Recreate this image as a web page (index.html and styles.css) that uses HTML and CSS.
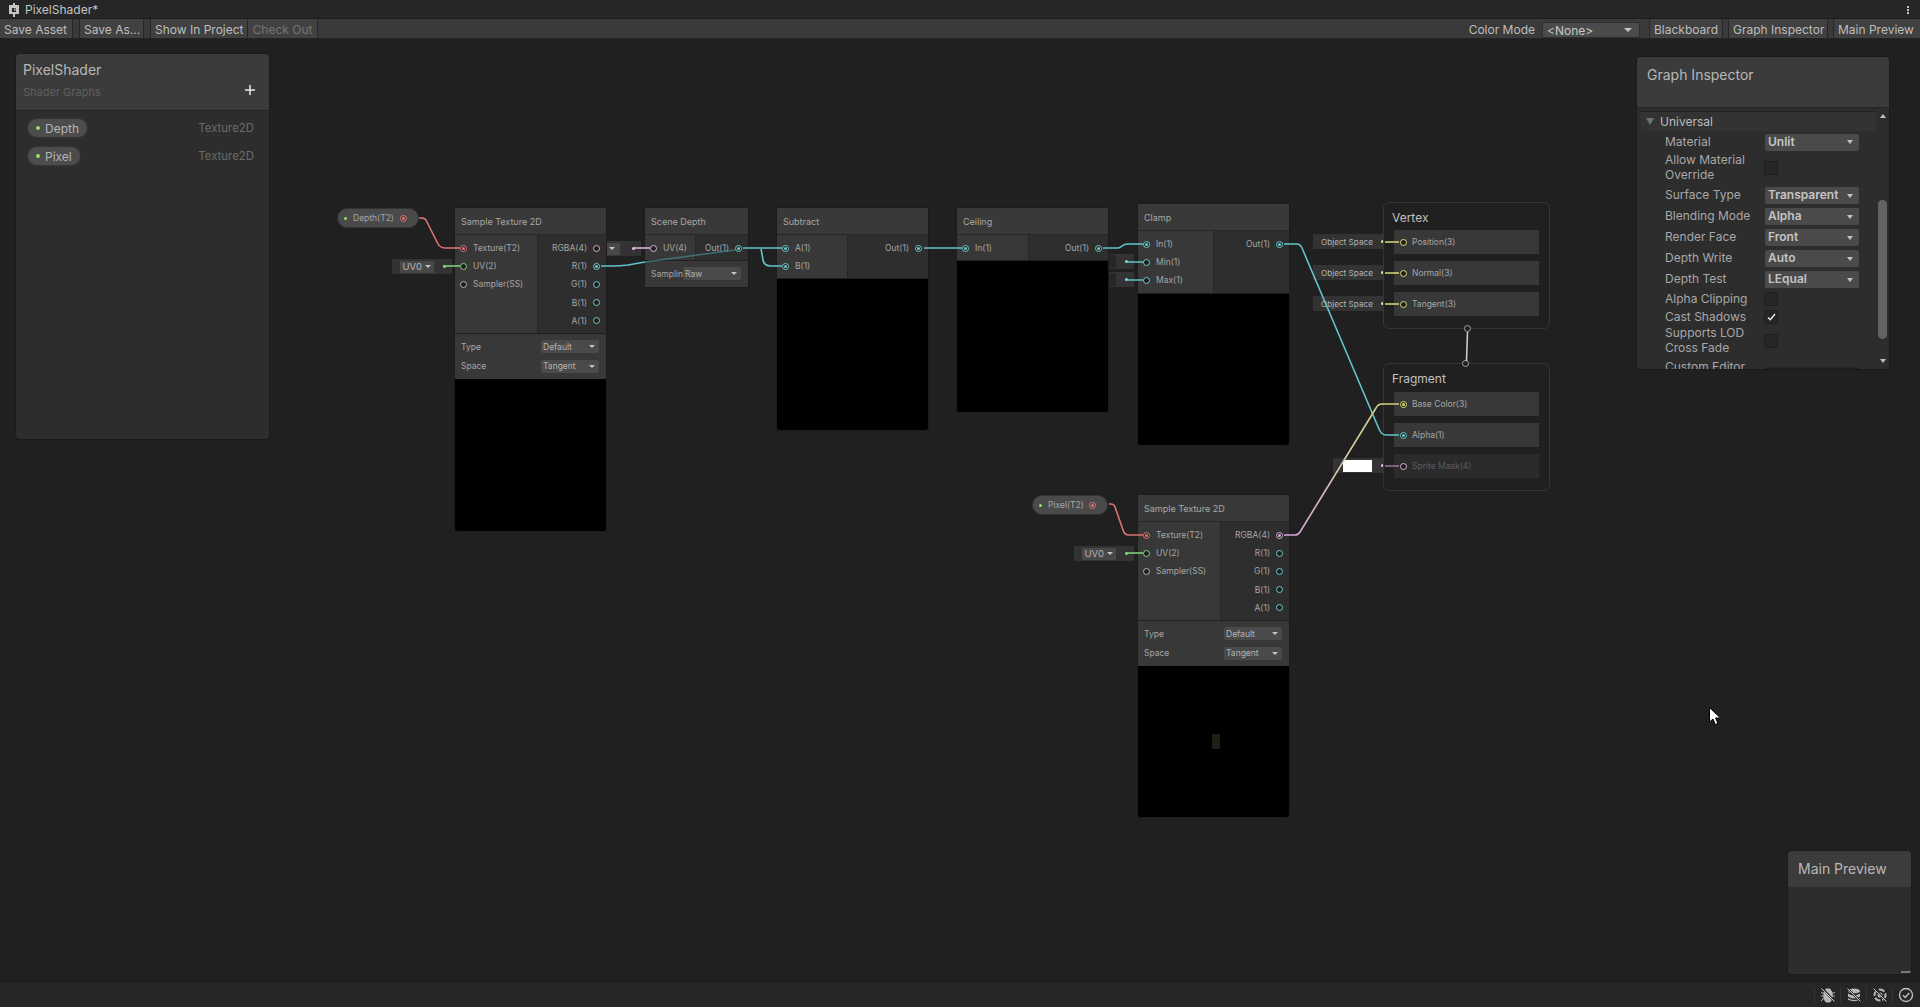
FILE: index.html
```html
<!DOCTYPE html>
<html lang="en">
<head>
<meta charset="utf-8">
<title>PixelShader</title>
<link rel="stylesheet" href="styles.css">
</head>
<body>
<div class="app">
  <header class="titlebar">
    <div class="tab">
      <svg class="tab-icon" viewBox="0 0 12 14" width="12" height="14"><path d="M5 0h2v2h4v9H7v3H5v-3H1V2h4z" fill="#c4c4c4"/><path d="M4 5h4v4H4z" fill="#262626"/><path d="M6 5.500h1.600v2H6z" fill="#c4c4c4"/></svg>
      <span>PixelShader*</span>
    </div>
    <div class="kebab"><i></i><i></i><i></i></div>
  </header>

  <nav class="toolbar">
    <button class="tb-btn w-save">Save Asset</button>
    <button class="tb-btn w-saveas">Save As...</button>
    <button class="tb-btn w-show">Show In Project</button>
    <button class="tb-btn w-check off">Check Out</button>
    <div class="tb-spring"></div>
    <span class="tb-label">Color Mode</span>
    <div class="tb-select"><span>&lt;None&gt;</span><i class="caret"></i></div>
    <button class="tb-btn w-board">Blackboard</button>
    <button class="tb-btn w-insp">Graph Inspector</button>
    <button class="tb-btn w-prev">Main Preview</button>
  </nav>

  <main class="canvas">
    <!-- default-value boxes sit behind their nodes -->
    <div class="slot s-uv1"><div class="slot-drop"><span>UV0</span><i class="caret"></i></div><i class="slot-dot green"></i></div>
    <div class="slot s-default"><div class="slot-drop"><span>Default</span><i class="caret"></i></div><i class="slot-dot pink"></i></div>
    <div class="slot s-min"><b class="slot-field"></b><i class="slot-dot teal"></i></div>
    <div class="slot s-max"><b class="slot-field"></b><i class="slot-dot teal"></i></div>
    <div class="slot s-uv2"><div class="slot-drop"><span>UV0</span><i class="caret"></i></div><i class="slot-dot green"></i></div>
    <div class="slot s-obj1"><span class="slot-text">Object Space</span><i class="slot-dot yellow"></i></div>
    <div class="slot s-obj2"><span class="slot-text">Object Space</span><i class="slot-dot yellow"></i></div>
    <div class="slot s-obj3"><span class="slot-text">Object Space</span><i class="slot-dot yellow"></i></div>
    <div class="slot s-color"><b class="swatch"></b><i class="slot-dot pink"></i></div>

    <div class="prop-pill p-depth"><i class="pdot"></i><span>Depth(T2)</span><i class="dot red on"></i></div>
    <div class="prop-pill p-pixel"><i class="pdot"></i><span>Pixel(T2)</span><i class="dot red on"></i></div>

    <section class="node n-sample1">
      <div class="node-title">Sample Texture 2D</div>
      <div class="ports">
        <div class="inputs w-83">
          <div class="port"><i class="dot red on"></i><span>Texture(T2)</span></div>
          <div class="port"><i class="dot green"></i><span>UV(2)</span></div>
          <div class="port"><i class="dot grey"></i><span>Sampler(SS)</span></div>
        </div>
        <div class="outputs">
          <div class="port"><span>RGBA(4)</span><i class="dot pink"></i></div>
          <div class="port"><span>R(1)</span><i class="dot teal on"></i></div>
          <div class="port"><span>G(1)</span><i class="dot teal"></i></div>
          <div class="port"><span>B(1)</span><i class="dot teal"></i></div>
          <div class="port"><span>A(1)</span><i class="dot teal"></i></div>
        </div>
      </div>
      <div class="options">
        <div class="opt"><label>Type</label><div class="opt-drop"><span>Default</span><i class="caret"></i></div></div>
        <div class="opt"><label>Space</label><div class="opt-drop"><span>Tangent</span><i class="caret"></i></div></div>
      </div>
      <div class="preview h-152"></div>
    </section>

    <section class="node n-depth">
      <div class="node-title">Scene Depth</div>
      <div class="ports">
        <div class="inputs w-51">
          <div class="port"><i class="dot pink"></i><span>UV(4)</span></div>
        </div>
        <div class="outputs">
          <div class="port"><span>Out(1)</span><i class="dot teal on"></i></div>
        </div>
      </div>
      <div class="options one">
        <div class="opt"><label class="clip">Sampling</label><div class="opt-drop raw"><span>Raw</span><i class="caret"></i></div></div>
      </div>
    </section>

    <section class="node n-sub">
      <div class="node-title">Subtract</div>
      <div class="ports">
        <div class="inputs w-71">
          <div class="port"><i class="dot teal on"></i><span>A(1)</span></div>
          <div class="port"><i class="dot teal on"></i><span>B(1)</span></div>
        </div>
        <div class="outputs">
          <div class="port"><span>Out(1)</span><i class="dot teal on"></i></div>
        </div>
      </div>
      <div class="preview h-151"></div>
    </section>

    <section class="node n-ceil">
      <div class="node-title">Ceiling</div>
      <div class="ports">
        <div class="inputs w-72">
          <div class="port"><i class="dot teal on"></i><span>In(1)</span></div>
        </div>
        <div class="outputs">
          <div class="port"><span>Out(1)</span><i class="dot teal on"></i></div>
        </div>
      </div>
      <div class="preview h-151"></div>
    </section>

    <section class="node n-clamp">
      <div class="node-title">Clamp</div>
      <div class="ports">
        <div class="inputs w-76">
          <div class="port"><i class="dot teal on"></i><span>In(1)</span></div>
          <div class="port"><i class="dot teal"></i><span>Min(1)</span></div>
          <div class="port"><i class="dot teal"></i><span>Max(1)</span></div>
        </div>
        <div class="outputs">
          <div class="port"><span>Out(1)</span><i class="dot teal on"></i></div>
        </div>
      </div>
      <div class="preview h-151"></div>
    </section>

    <section class="node n-sample2">
      <div class="node-title">Sample Texture 2D</div>
      <div class="ports">
        <div class="inputs w-83">
          <div class="port"><i class="dot red on"></i><span>Texture(T2)</span></div>
          <div class="port"><i class="dot green"></i><span>UV(2)</span></div>
          <div class="port"><i class="dot grey"></i><span>Sampler(SS)</span></div>
        </div>
        <div class="outputs">
          <div class="port"><span>RGBA(4)</span><i class="dot pink on"></i></div>
          <div class="port"><span>R(1)</span><i class="dot teal"></i></div>
          <div class="port"><span>G(1)</span><i class="dot teal"></i></div>
          <div class="port"><span>B(1)</span><i class="dot teal"></i></div>
          <div class="port"><span>A(1)</span><i class="dot teal"></i></div>
        </div>
      </div>
      <div class="options">
        <div class="opt"><label>Type</label><div class="opt-drop"><span>Default</span><i class="caret"></i></div></div>
        <div class="opt"><label>Space</label><div class="opt-drop"><span>Tangent</span><i class="caret"></i></div></div>
      </div>
      <div class="preview h-151"><b class="speck"></b></div>
    </section>

    <section class="context c-vertex">
      <h3>Vertex</h3>
      <div class="block"><i class="dot yellow"></i><span>Position(3)</span></div>
      <div class="block"><i class="dot yellow"></i><span>Normal(3)</span></div>
      <div class="block"><i class="dot yellow"></i><span>Tangent(3)</span></div>
      <i class="dot flow flow-bottom"></i>
    </section>
    <section class="context c-fragment">
      <h3>Fragment</h3>
      <div class="block"><i class="dot yellow on"></i><span>Base Color(3)</span></div>
      <div class="block"><i class="dot teal on"></i><span>Alpha(1)</span></div>
      <div class="block dim"><i class="dot pink"></i><span>Sprite Mask(4)</span></div>
      <i class="dot flow flow-top"></i>
    </section>

    <svg class="wires" viewBox="0 39 1920 944" width="1920" height="944" fill="none">
      <defs>
        <linearGradient id="rgbaWire" gradientUnits="userSpaceOnUse" x1="1290" y1="535" x2="1390" y2="404">
          <stop offset="0" stop-color="#d8a4d8"/><stop offset=".5" stop-color="#d8c8b0"/><stop offset="1" stop-color="#cfd07c"/>
        </linearGradient>
      </defs>
      <path class="w w-red" d="M419 218h3q3 0 4.500 3l11 22q2.500 5 7.500 5H460"/>
      <path class="w w-red" d="M1109 504h2q3 0 4 3l8 23q1.500 5 6 5H1143"/>
      <path class="w w-green" d="M443 266H460"/>
      <path class="w w-green" d="M1126 553H1143"/>
      <path class="w w-pink" d="M634 248H650"/>
      <path class="w w-teal" d="M601 266H612q8 0 16-1l17-3"/>
      <path class="w w-teal ghost" d="M645 262L735 250"/>
      <path class="w w-teal" d="M743 248H782"/>
      <path class="w w-teal" d="M761 249q1 5 2 11t8 6H782"/>
      <path class="w w-teal" d="M924 248H962"/>
      <path class="w w-teal" d="M1103 248H1118q2 0 4-2t6-2H1143"/>
      <path class="w w-teal" d="M1128 262H1143M1128 280H1143"/>
      <path class="w w-teal" d="M1284 244H1297q3 0 5 4L1379 429q2.500 6 7 6H1399"/>
      <path class="w w-y" d="M1385 242H1399M1385 273H1399M1385 304H1399"/>
      <path class="w w-pink dimmed" d="M1385 466H1399"/>
      <path class="w" stroke="url(#rgbaWire)" d="M1284 535H1295q3 0 5-3L1376 408q2-4 6-4H1399"/>
      <path class="w w-flow" d="M1467.500 332L1466.500 361"/>
    </svg>

    <aside class="panel blackboard">
      <div class="panel-head bb-head">
        <div class="panel-title">PixelShader</div>
        <div class="bb-sub"><span>Shader Graphs</span><svg class="plus" width="10" height="10" viewBox="0 0 10 10"><path d="M5 0v10M0 5h10" stroke="#e8e8e8" stroke-width="1.500"/></svg></div>
      </div>
      <div class="bb-list">
        <div class="bb-row"><div class="bb-pill"><i class="pdot"></i><span>Depth</span></div><span class="bb-type">Texture2D</span></div>
        <div class="bb-row"><div class="bb-pill"><i class="pdot"></i><span>Pixel</span></div><span class="bb-type">Texture2D</span></div>
      </div>
    </aside>

    <aside class="panel inspector">
      <div class="panel-head ins-head"><div class="panel-title">Graph Inspector</div></div>
      <div class="ins-body">
        <div class="ins-scroll">
          <div class="ins-section"><i class="tri"></i><span>Universal</span></div>
          <div class="ins-row r-20"><label>Material</label><div class="ins-drop"><span>Unlit</span><i class="caret"></i></div></div>
          <div class="ins-row r-31"><label>Allow Material<br>Override</label><i class="check"></i></div>
          <div class="ins-row r-21 first-drop"><label>Surface Type</label><div class="ins-drop"><span>Transparent</span><i class="caret"></i></div></div>
          <div class="ins-row r-21"><label>Blending Mode</label><div class="ins-drop"><span>Alpha</span><i class="caret"></i></div></div>
          <div class="ins-row r-21"><label>Render Face</label><div class="ins-drop"><span>Front</span><i class="caret"></i></div></div>
          <div class="ins-row r-21"><label>Depth Write</label><div class="ins-drop"><span>Auto</span><i class="caret"></i></div></div>
          <div class="ins-row r-21"><label>Depth Test</label><div class="ins-drop"><span>LEqual</span><i class="caret"></i></div></div>
          <div class="ins-row r-18"><label>Alpha Clipping</label><i class="check"></i></div>
          <div class="ins-row r-18"><label>Cast Shadows</label><i class="check checked"><svg width="9" height="8" viewBox="0 0 9 8"><path d="M1 4.500L3.300 6.800 8 1" stroke="#eee" stroke-width="1.400" fill="none"/></svg></i></div>
          <div class="ins-row r-29"><label>Supports LOD<br>Cross Fade</label><i class="check"></i></div>
          <div class="ins-row r-20 custom"><label>Custom Editor</label><div class="ins-text"></div></div>
        </div>
        <div class="scrollbar">
          <i class="arrow up"></i>
          <div class="track"><div class="thumb"></div></div>
          <i class="arrow down"></i>
        </div>
      </div>
    </aside>

    <aside class="panel preview-win">
      <div class="panel-head pv-head"><div class="panel-title">Main Preview</div></div>
      <i class="resize"></i>
    </aside>

    <svg class="cursor" width="12" height="19" viewBox="0 0 12 19"><path d="M.5.500V15l3.500-3 2.300 5.500 2.600-1.100L6.600 11H11.500z" fill="#fff" stroke="#000" stroke-width="1"/></svg>
  </main>

  <footer class="status">
    <div class="st-item">
      <svg width="16" height="16" viewBox="0 0 16 16"><path d="M5 4l1-2h4l1 2 1 1v7l-2 3H6l-2-3V5zM1 5l3 2M15 5l-3 2M1 9h3M15 9h-3M1 14l3-3M15 14l-3-3" stroke="#b8b8b8" fill="#b8b8b8"/><path d="M2 1l13 14" stroke="#262626" stroke-width="2"/><path d="M1.500 1.500l13 13" stroke="#c8c8c8"/></svg>
    </div>
    <div class="st-item">
      <svg width="16" height="16" viewBox="0 0 16 16"><ellipse cx="8" cy="4" rx="6" ry="2.500" fill="#b8b8b8"/><path d="M2 6.500q6 4 12 0v3q-6 4-12 0zM2 11q6 4 12 0v1.500q-6 3.500-12 0z" fill="#b8b8b8"/><path d="M2 2l13 13" stroke="#262626" stroke-width="2"/><path d="M1.500 1.500l13 13" stroke="#c8c8c8"/></svg>
    </div>
    <div class="st-item">
      <svg width="16" height="16" viewBox="0 0 16 16" fill="none"><circle cx="8" cy="8" r="5.500" stroke="#b8b8b8" stroke-width="2" stroke-dasharray="6 2"/><circle cx="8" cy="8" r="2.500" fill="#b8b8b8"/><path d="M2 1.500l13 13" stroke="#262626" stroke-width="2"/><path d="M1.500 1.500l13 13" stroke="#c8c8c8"/></svg>
    </div>
    <div class="st-item">
      <svg width="16" height="16" viewBox="0 0 16 16" fill="none"><circle cx="8" cy="8" r="6.500" stroke="#c4c4c4" stroke-width="1.300"/><path d="M5 8.200l2.200 2.200L11.200 6" stroke="#c4c4c4" stroke-width="1.400"/></svg>
    </div>
  </footer>
</div>
</body>
</html>
```
FILE: styles.css
```css
* { box-sizing: border-box; }
html, body { margin: 0; height: 100%; overflow: hidden; background: #202020; }
body { font-family: Inter, "Noto Sans", sans-serif; font-size: 12px; color: #bdbdbd; }
button { font: inherit; color: inherit; }
i, b { display: block; font-style: normal; }
.app { display: flex; flex-direction: column; height: 1007px; width: 1920px; }

/* title + toolbar */
.titlebar { height: 19px; flex: none; background: #262626; display: flex; justify-content: space-between; align-items: center; padding: 1px 11px 0 8px; border-bottom: 1px solid #1c1c1c; }
.tab { display: flex; align-items: center; gap: 5px; font-size: 12px; color: #c4c4c4; }
.tab-icon { flex: none; }
.kebab { display: flex; flex-direction: column; gap: 1px; }
.kebab i { width: 2px; height: 2px; background: #c4c4c4; }

.toolbar { height: 20px; flex: none; display: flex; align-items: stretch; background: #3a3a3a; border-bottom: 1px solid #232323; }
.tb-btn { height: 19px; border: 0; border-right: 1px solid #262626; background: #414141; padding: 1px 6px 0 4px; text-align: center; color: #bdbdbd; font-size: 12px; white-space: nowrap; }
.tb-btn.off { color: #747474; }
.w-save { width: 73px; margin-right: 6px; border-left: 0; }
.w-saveas { width: 65px; margin-right: 6px; border-left: 1px solid #262626; padding-right: 8px; }
.w-show { width: 98px; border-left: 1px solid #262626; padding-right: 4px; }
.w-check { width: 70px; padding-right: 4px; }
.w-board { width: 74px; margin-right: 5px; border-left: 1px solid #262626; padding-right: 8px; }
.w-insp { width: 100px; margin-right: 5px; border-left: 1px solid #262626; padding-right: 8px; }
.w-prev { width: 87px; border-left: 1px solid #262626; border-right: 0; padding-right: 8px; }
.tb-spring { flex: 1; }
.tb-label { align-self: center; margin-right: 7px; padding-top: 1px; }
.tb-select { width: 98px; height: 16px; margin: 3px 9px 0 0; padding: 0 4px; background: #4b4b4b; border-radius: 2px; border: 1px solid #2e2e2e; display: flex; align-items: center; justify-content: space-between; color: #c8c8c8; font-size: 12px; }
.tb-select .caret { border-width: 4px 4px 0; margin-right: 3px; }
.caret { width: 0; height: 0; flex: none; border-style: solid; border-width: 3px 3px 0; border-color: #c4c4c4 transparent transparent; }

/* graph canvas */
.canvas { flex: 1; position: relative; overflow: hidden; background: #202020; }

.node { position: absolute; background: #2e2e2e; font-size: 8.500px; color: #a6a6a6; box-shadow: 0 0 0 1px #1b1b1b; border-radius: 1px; }
.n-sample1 { left: 455px; top: 169px; width: 151px; }
.n-depth { left: 645px; top: 169px; width: 103px; }
.n-sub { left: 777px; top: 169px; width: 151px; }
.n-ceil { left: 957px; top: 169px; width: 151px; }
.n-clamp { left: 1138px; top: 165px; width: 151px; }
.n-sample2 { left: 1138px; top: 456px; width: 151px; }

.node-title { height: 27px; display: flex; align-items: center; padding-left: 6px; background: #393939; font-size: 9px; color: #a8a8a8; border-bottom: 1px solid #272727; }
.ports { display: flex; border-bottom: 1px solid #1f1f1f; }
.inputs { background: #383838; flex: none; border-right: 1px solid #272727; padding: 4px 0 3px 5px; }
.outputs { flex: 1; padding: 4px 6px 3px 0; }
.w-83 { width: 83px; }
.w-51 { width: 51px; }
.w-71 { width: 71px; }
.w-72 { width: 72px; }
.w-76 { width: 76px; }
.port { height: 18.200px; display: flex; align-items: center; gap: 6px; white-space: nowrap; }
.outputs .port { justify-content: flex-end; }
.dot { width: 7px; height: 7px; flex: none; border-radius: 50%; border: 1px solid #bbb; background: #1d1d1d; position: relative; }
.dot.on::after { content: ""; position: absolute; inset: 1px; border-radius: 50%; background: currentColor; }
.dot.red { border-color: #e27a7a; color: #e27a7a; }
.dot.green { border-color: #86d886; color: #86d886; }
.dot.teal { border-color: #70cdd0; color: #70cdd0; }
.dot.pink { border-color: #e0b0e0; color: #e0b0e0; }
.dot.yellow { border-color: #e0e07c; color: #e0e07c; }
.dot.grey { border-color: #b4b4b4; }

.options { background: #383838; padding: 3px 7px 0 6px; height: 45px; }
.options.one { height: 26px; padding-left: 6px; }
.opt { height: 19.500px; display: flex; align-items: center; justify-content: space-between; }
.opt label { white-space: nowrap; }
.opt label.clip { width: 32px; overflow: hidden; }
.opt-drop { width: 58px; height: 13px; background: #4a4a4a; border-radius: 2px; padding: 0 4px 0 2px; display: flex; align-items: center; justify-content: space-between; color: #b4b4b4; }
.preview { background: #000; position: relative; border-radius: 0 0 2px 2px; }
.h-152 { height: 152px; }
.h-151 { height: 151px; }
.speck { position: absolute; left: 74px; top: 68px; width: 8px; height: 15px; background: #1e1e14; }

/* value slots */
.slot { position: absolute; height: 15px; background: #333; display: flex; align-items: center; justify-content: flex-end; padding-right: 6px; font-size: 8.500px; color: #b4b4b4; }
.slot-dot { width: 3px; height: 3px; flex: none; border-radius: 50%; background: #fff; }
.slot-dot.green { background: #86d886; }
.slot-dot.pink { background: #eac0ea; }
.slot-dot.teal { background: #8adadd; }
.slot-dot.yellow { background: #e8e88a; }
.slot-drop { height: 12px; background: #484848; border-radius: 1px; padding: 0 3px 0 2px; display: flex; align-items: center; gap: 3px; margin-right: 9px; font-size: 9.500px; }
.slot-text { margin-right: 8px; font-size: 8.200px; white-space: nowrap; }
.slot-field { position: absolute; left: 0; top: 1px; width: 8px; height: 13px; background: #262626; border-radius: 0 2px 2px 0; }
.s-uv1 { left: 392px; top: 220px; width: 60px; }
.s-uv2 { left: 1074px; top: 507px; width: 60px; }
.s-default { left: 575px; top: 202px; width: 66px; }
.s-default .slot-drop { font-size: 8.500px; margin-right: 12px; padding-right: 5px; }
.s-min { left: 1108px; top: 215px; width: 26px; }
.s-max { left: 1108px; top: 233px; width: 26px; }
.s-obj1 { left: 1313px; top: 195px; width: 77px; }
.s-obj2 { left: 1313px; top: 226px; width: 77px; }
.s-obj3 { left: 1313px; top: 257px; width: 77px; }
.s-color { left: 1333px; top: 419px; width: 57px; }
.swatch { position: absolute; left: 10px; top: 2px; width: 29px; height: 12px; background: #fff; }

.prop-pill { position: absolute; height: 20px; border-radius: 10px; background: #4a4a4a; display: flex; align-items: center; font-size: 8.500px; color: #a6a6a6; padding: 0 11px 0 6px; border: 1px solid #333; }
.p-depth { left: 337px; top: 169px; width: 82px; }
.p-pixel { left: 1032px; top: 456px; width: 76px; }
.prop-pill .pdot { margin-right: 6px; width: 3px; height: 3px; }
.prop-pill .dot { margin-left: auto; background: #3a3a3a; }
.pdot { width: 4px; height: 4px; flex: none; border-radius: 50%; background: #8ee36a; }

.context { position: absolute; left: 1383px; width: 167px; border: 1px solid #353535; border-radius: 6px; background: #202020; padding: 0 10px; }
.c-vertex { top: 163px; height: 127px; }
.c-fragment { top: 324px; height: 128px; }
.context h3 { margin: 0; height: 27px; padding-top: 8px; font-size: 12px; font-weight: 400; line-height: 14px; color: #c0c0c0; position: relative; left: -2px; }
.c-fragment h3 { height: 28px; }
.block { height: 24px; background: #383838; margin-bottom: 7px; display: flex; align-items: center; font-size: 8.500px; color: #a6a6a6; position: relative; padding-left: 18px; white-space: nowrap; }
.block .dot { position: absolute; left: 6px; top: 8.500px; }
.block.dim { background: #2b2b2b; color: #5c5c5c; }
.flow { position: absolute; left: 80px; border-color: #a4a4a4; background: #202020; width: 7px; height: 7px; }
.flow-bottom { bottom: -4px; }
.flow-top { top: -4px; left: 78px; }

.wires { position: absolute; left: 0; top: 0; pointer-events: none; }
.w { stroke-width: 1.600; }
.w-red { stroke: #dd7272; }
.w-green { stroke: #7ad07a; }
.w-teal { stroke: #62c4c9; }
.w-teal.ghost { stroke: #4d9ea2; stroke-opacity: .55; }
.w-pink { stroke: #dcaedc; }
.w-pink.dimmed { stroke-opacity: .6; }
.w-y { stroke: #d8d87c; }
.w-flow { stroke: #c8c8c8; }

/* floating panels */
.panel { position: absolute; border-radius: 4px; background: #2d2d2d; box-shadow: 0 0 0 1px #1b1b1b; overflow: hidden; display: flex; flex-direction: column; }
.panel-head { background: #3b3b3b; flex: none; border-bottom: 1px solid #242424; }
.panel-title { font-size: 14px; line-height: 17px; color: #b8b8b8; }

.blackboard { left: 16px; top: 15px; width: 253px; height: 385px; }
.bb-head { height: 57px; padding: 7px 7px 0 7px; }
.bb-sub { display: flex; justify-content: space-between; align-items: center; margin-top: 7px; font-size: 11px; color: #5f5f5f; padding-right: 7px; }
.plus { position: relative; top: -2px; }
.bb-list { padding: 3px 15px 0 11px; }
.bb-row { height: 28px; display: flex; align-items: center; justify-content: space-between; }
.bb-pill { height: 20px; padding: 0 8px 0 8px; border-radius: 10px; background: #4c4c4c; border: 1px solid #333; display: flex; align-items: center; gap: 5px; color: #b4b4b4; font-size: 12px; }
.bb-type { color: #6b6b6b; font-size: 11.400px; }

.inspector { left: 1637px; top: 18px; width: 252px; height: 312px; }
.ins-head { height: 51px; padding: 9px 10px; }
.ins-body { flex: 1; min-height: 0; display: flex; padding: 3px 0 0 4px; }
.ins-scroll { flex: 1; overflow: hidden; min-width: 0; }
.ins-section { height: 20px; background: #333; display: flex; align-items: center; padding-left: 5px; gap: 6px; font-size: 12px; color: #bdbdbd; border-top: 1px solid #232323; }
.tri { width: 0; height: 0; border-style: solid; border-width: 7px 4.500px 0; border-color: #727272 transparent transparent; }
.ins-row { display: flex; align-items: center; padding-left: 24px; color: #a8a8a8; font-size: 12px; line-height: 14.500px; }
.ins-row label { width: 100px; flex: none; white-space: nowrap; }
.r-18 { height: 18px; }
.r-20 { height: 20px; }
.r-21 { height: 21px; }
.r-29 { height: 29px; }
.r-31 { height: 31px; }
.ins-section + .r-20 { margin-top: 1px; }
.first-drop { margin-top: 2px; }
.ins-row.custom { margin-top: 2px; align-items: flex-start; padding-top: 3px; overflow: visible; }
.ins-text { width: 94px; height: 14px; background: #1e1e1e; border: 1px solid #262626; margin-top: 7px; }
.ins-drop { width: 94px; height: 17px; background: #4a4a4a; border-radius: 2px; display: flex; align-items: center; justify-content: space-between; padding: 0 6px 0 3px; color: #c4c4c4; font-weight: 600; font-size: 12px; }
.ins-drop .caret { border-width: 4px 3.500px 0; }
.check { width: 14px; height: 14px; background: #262626; border: 1px solid #1f1f1f; border-radius: 2px; margin-left: -1px; display: flex; align-items: center; justify-content: center; }
.scrollbar { width: 13px; flex: none; background: #2d2d2d; display: flex; flex-direction: column; align-items: center; padding: 3px 0 6px; }
.track { flex: 1; width: 100%; padding: 82px 2px 0 2px; }
.thumb { height: 139px; width: 9px; border-radius: 5px; background: #626262; }
.arrow { width: 0; height: 0; border-style: solid; border-color: transparent; flex: none; }
.arrow.up { border-width: 0 3.500px 4px; border-bottom-color: #c0c0c0; }
.arrow.down { border-width: 4px 3.500px 0; border-top-color: #c0c0c0; }

.preview-win { left: 1788px; top: 812px; width: 123px; height: 123px; }
.pv-head { height: 36px; padding: 9px 10px; border-bottom: 0; background: #3c3c3c; }
.resize { position: absolute; right: 0; bottom: 1px; width: 10px; height: 2px; background: #7a7a7a; }

.cursor { position: absolute; left: 1709px; top: 668px; }

/* status bar */
.status { height: 24px; flex: none; background: #262626; display: flex; justify-content: flex-end; align-items: center; padding-right: 2px; }
.st-item { width: 26px; height: 16px; border-left: 1px solid #333; display: flex; align-items: center; justify-content: center; }
```
